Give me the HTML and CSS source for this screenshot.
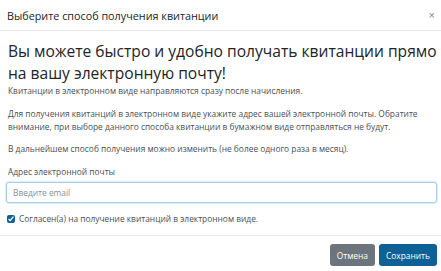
FILE: index.html
```html
<!DOCTYPE html>
<html lang="ru">
<head>
  <meta charset="UTF-8">
  <title>Выберите способ получения квитанции</title>
  <link rel="stylesheet" href="styles.css">
</head>
<body>
  <div class="modal">
    <header class="modal-header">
      <h5 class="modal-title">Выберите способ получения квитанции</h5>
      <button class="close" type="button" aria-label="Закрыть">×</button>
    </header>
    <div class="modal-body">
      <h2>Вы можете быстро и удобно получать квитанции прямо на вашу электронную почту!</h2>
      <p>Квитанции в электронном виде направляются сразу после начисления.</p>
      <p>Для получения квитанций в электронном виде укажите адрес вашей электронной почты. Обратите внимание, при выборе данного способа квитанции в бумажном виде отправляться не будут.</p>
      <p>В дальнейшем способ получения можно изменить (не более одного раза в месяц).</p>
      <label class="field-label" for="email">Адрес электронной почты</label>
      <input class="form-control" id="email" type="email" placeholder="Введите email">
      <label class="check">
        <input type="checkbox" checked>
        <span>Согласен(а) на получение квитанций в электронном виде.</span>
      </label>
    </div>
    <footer class="modal-footer">
      <button class="btn btn-secondary" type="button">Отмена</button>
      <button class="btn btn-primary" type="button">Сохранить</button>
    </footer>
  </div>
</body>
</html>
```

FILE: styles.css
```css
:root { --text: #212529; --muted: #4a4f55; --border: #e6e8ea; --primary: #0d6195; --secondary: #6c757d; }
body { margin:0; background:#fff; font-family:"Open Sans", "Noto Sans", sans-serif; color: var(--text); font-size:8.4px; line-height:13px; }
.modal { width:441px; height:271px; background:#fff; overflow:hidden; }
.modal-header { display:flex; align-items:center; justify-content:space-between; height:31px; padding:0 6px 0 7px; border-bottom:1px solid var(--border); box-sizing:border-box; }
.modal-title { margin:0; font-size:10.8px; font-weight:400; }
.close { background:none; border:none; padding:0; font-size:11px; line-height:1; color:#888; cursor:pointer; }
.modal-body { padding:9px 4px 10px 6px; }
.modal-body h2 { margin:0 0 0 2px; font-size:15.6px; font-weight:500; line-height:22px; }
.modal-body p { margin:0 0 10px 2px; color: var(--muted); }
.modal-body p + p { margin-bottom:9px; }
.modal-body p:nth-of-type(3) { margin-bottom:10px; }
.field-label { display:block; margin:0 0 4px 2px; color: var(--muted); }
.form-control { display:block; width:100%; height:21px; box-sizing:border-box; padding:0 6px; border:1px solid #a8cde6; border-radius:3px; font:inherit; color: var(--text); box-shadow: 0 0 0 1px rgba(160,205,235,0.35); }
.form-control::placeholder { color:#8a8f94; }
.check { display:flex; align-items:center; gap:4px; margin-top:9px; margin-left:1px; color: var(--muted); }
.check input { margin:0; width:8px; height:8px; accent-color: var(--primary); }
.modal-footer { display:flex; justify-content:flex-end; gap:4px; padding:8px 4px 0; border-top:1px solid var(--border); }
.btn { height:22px; padding:0 7px; border:none; border-radius:3px; color:#fff; font:inherit; cursor:pointer; }
.btn-secondary { background: var(--secondary); }
.btn-primary { background: var(--primary); }
```
